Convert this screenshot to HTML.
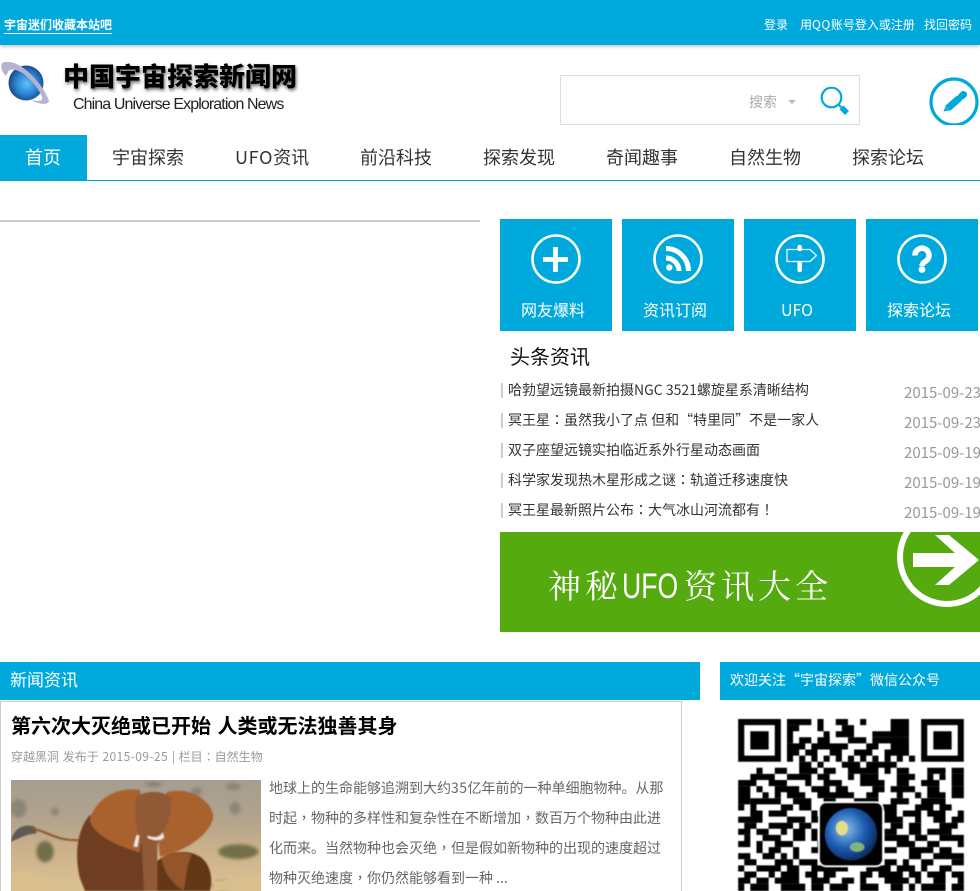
<!DOCTYPE html>
<html lang="zh-CN"><head><meta charset="utf-8"><title>中国宇宙探索新闻网</title>
<style>
*{margin:0;padding:0;box-sizing:border-box}
html,body{width:980px;height:891px;overflow:hidden;background:#fff}
body{position:relative;font-family:"WenQuanYi Zen Hei","Noto Sans CJK SC",sans-serif;color:#333}
.a{position:absolute;white-space:nowrap}
.b{background:#00a9dc}
.w{color:#fff}
.n{top:135px;height:45px;line-height:45px;font-size:18px;color:#333}
.t{top:219px;width:112px;height:112px;background:#00a9dc;color:#fff;font-size:16px;text-align:center}
.t span{position:absolute;left:-3px;right:3px;top:78px;line-height:24px}
.t svg{position:absolute;left:0;top:0}
.l{left:508px;font-size:14px;line-height:20px;color:#333}
.s{left:501px;width:2px;height:15px;background:#ccc}
.d{left:904px;font-size:15px;line-height:20px;color:#999}
.p{left:269px;font-size:14px;line-height:30px;color:#666}
i{font-style:normal;font-family:"Noto Sans CJK TC",sans-serif}
</style></head><body>
<div class="a b" style="left:0;top:0;width:980px;height:45px;box-shadow:0 1px 4px rgba(0,0,0,.3)"></div>
<div class="a w" style="left:4px;top:17px;font-size:12px;line-height:16px;font-weight:700;border-bottom:1px solid #fff">宇宙迷们收藏本站吧</div>
<div class="a w" style="left:764px;top:17px;font-size:12px;line-height:16px">登录</div>
<div class="a w" style="left:800px;top:17px;font-size:12px;line-height:16px">用<span style="letter-spacing:.5px">QQ</span>账号登入或注册</div>
<div class="a w" style="left:924px;top:17px;font-size:12px;line-height:16px">找回密码</div>

<svg class="a" style="left:0;top:55px" width="52" height="58" viewBox="0 0 52 58">
<defs><radialGradient id="pl" cx=".52" cy=".52" r=".55"><stop offset="0" stop-color="#5cc2f8"/><stop offset=".55" stop-color="#2c86d2"/><stop offset="1" stop-color="#173f7a"/></radialGradient></defs>
<circle cx="26" cy="28" r="17.500" fill="url(#pl)"/>
<path d="M2 8C8 5 18 8 26 15C36 23 46 36 49 46C48 50 40 50 31 45C37 46 43 47 42 42C38 32 30 24 24 19C15 13 9 14 8 17L6 21C2 17 0 12 2 8Z" fill="#b4b4d2"/>
</svg>
<div class="a" style="left:63px;top:59px;font-size:26px;line-height:34px;font-weight:900;color:#000;text-shadow:1px 2px 3px #666;font-family:'Noto Sans CJK SC',sans-serif">中国宇宙探索新闻网</div>
<div class="a" style="left:73px;top:95px;font-size:16px;line-height:20px;color:#222;letter-spacing:-.9px;font-family:'Liberation Sans',sans-serif">China Universe Exploration News</div>

<div class="a" style="left:560px;top:75px;width:300px;height:50px;border:1px solid #ddd"></div>
<div class="a" style="left:749px;top:93px;font-size:14px;line-height:18px;color:#aaa">搜索</div>
<svg class="a" style="left:786px;top:98px" width="12" height="8"><path d="M2 2h8l-4 4z" fill="#bbb"/></svg>
<svg class="a" style="left:818px;top:84px" width="34" height="34" viewBox="0 0 34 34"><circle cx="13.500" cy="13.500" r="9.800" fill="none" stroke="#00a9dc" stroke-width="2.200"/><path d="M20.500 20.500L24 24" stroke="#00a9dc" stroke-width="2"/><path d="M23.500 23.500L29 29" stroke="#00a9dc" stroke-width="5.500"/></svg>
<svg class="a" style="left:926px;top:74px" width="54" height="51" viewBox="0 0 54 51"><circle cx="28" cy="28" r="23" fill="none" stroke="#00a9dc" stroke-width="3.200"/><path d="M21.500 34.500L33.500 24" stroke="#00a9dc" stroke-width="7"/><path d="M35.500 22.300L37.500 20.500" stroke="#00a9dc" stroke-width="7" stroke-linecap="round"/><path d="M17.500 37.500l2-5l3.500 4z" fill="#00a9dc"/></svg>

<div class="a b" style="left:0;top:135px;width:87px;height:45px"></div>
<div class="a" style="left:0;top:180px;width:980px;height:1px;background:#00a9dc"></div>
<div class="a n" style="left:25px;color:#fff">首页</div>
<div class="a n" style="left:112px">宇宙探索</div>
<div class="a n" style="left:235px"><span style="letter-spacing:.7px">UFO</span>资讯</div>
<div class="a n" style="left:360px">前沿科技</div>
<div class="a n" style="left:483px">探索发现</div>
<div class="a n" style="left:606px">奇闻趣事</div>
<div class="a n" style="left:729px">自然生物</div>
<div class="a n" style="left:852px">探索论坛</div>

<div class="a" style="left:0;top:220px;width:480px;height:2px;background:#ccc"></div>

<div class="a t" style="left:500px"><svg width="112" height="80" fill="none" stroke="#fff"><circle cx="56" cy="40" r="23.500" stroke-width="2.600"/><path d="M55.500 28v25M43 40.500h25" stroke-width="4.800"/></svg><span>网友爆料</span></div>
<div class="a t" style="left:622px"><svg width="112" height="80" fill="none" stroke="#fff"><circle cx="56" cy="40" r="23.500" stroke-width="2.600"/><path d="M44 29.500A22.500 22.500 0 0 1 66.500 52M44 39A13 13 0 0 1 57 52" stroke-width="5"/><circle cx="47.300" cy="48.500" r="3.200" fill="#fff" stroke="none"/></svg><span>资讯订阅</span></div>
<div class="a t" style="left:744px"><svg width="112" height="80" fill="none" stroke="#fff"><circle cx="56" cy="40" r="23.500" stroke-width="2.600"/><path d="M43 30.500h23l6.500 6l-6.500 6H43z" stroke-width="1.200"/><path d="M55.700 28v2M55.700 44v7" stroke-width="4.500" stroke-linecap="round"/></svg><span>UFO</span></div>
<div class="a t" style="left:866px"><svg width="112" height="80" fill="none" stroke="#fff"><circle cx="56" cy="40" r="23.500" stroke-width="2.600"/><path d="M49 36.500a7 7 0 1 1 11 5.500q-4 2.500-4 5" stroke-width="5.500"/><circle cx="56" cy="50.500" r="3.400" fill="#fff" stroke="none"/></svg><span>探索论坛</span></div>

<div class="a" style="left:510px;top:342px;font-size:20px;line-height:28px;color:#111">头条资讯</div>
<div class="a s" style="top:383px"></div><div class="a l" style="top:380px">哈勃望远镜最新拍摄NGC 3521螺旋星系清晰结构</div><div class="a d" style="top:383px">2015-09-23</div>
<div class="a s" style="top:413px"></div><div class="a l" style="top:410px">冥王星<i lang="zh-TW">：</i>虽然我小了点 但和“特里同”不是一家人</div><div class="a d" style="top:413px">2015-09-23</div>
<div class="a s" style="top:443px"></div><div class="a l" style="top:440px">双子座望远镜实拍临近系外行星动态画面</div><div class="a d" style="top:443px">2015-09-19</div>
<div class="a s" style="top:473px"></div><div class="a l" style="top:470px">科学家发现热木星形成之谜<i lang="zh-TW">：</i>轨道迁移速度快</div><div class="a d" style="top:473px">2015-09-19</div>
<div class="a s" style="top:503px"></div><div class="a l" style="top:500px">冥王星最新照片公布<i lang="zh-TW">：</i>大气冰山河流都有<i lang="zh-TW">！</i></div><div class="a d" style="top:503px">2015-09-19</div>

<div class="a" style="left:500px;top:532px;width:480px;height:100px;background:#55aa10;overflow:hidden">
<svg class="a" style="left:0;top:0" width="480" height="100"><circle cx="447" cy="25" r="47" fill="none" stroke="#fff" stroke-width="6"/><path d="M413 21h42L435 3h14l30 25l-30 25h-14l20-18h-42z" fill="#fff"/></svg>
<div class="a" style="left:48px;top:31px;font-size:33px;line-height:44px;color:#fff;font-family:'Noto Serif CJK SC',serif;letter-spacing:4px">神秘<span style="display:inline-block;width:62px;font-family:'Liberation Sans',sans-serif;letter-spacing:0;font-size:35px;transform:scaleX(.76);transform-origin:0 50%">UFO</span>资讯大全</div>
</div>

<div class="a b" style="left:0;top:662px;width:700px;height:38px"></div>
<div class="a w" style="left:10px;top:667px;font-size:17px;line-height:24px">新闻资讯</div>
<div class="a b" style="left:720px;top:662px;width:260px;height:38px"></div>
<div class="a w" style="left:730px;top:671px;font-size:14px;line-height:18px">欢迎关注“宇宙探索”微信公众号</div>

<div class="a" style="left:0;top:701px;width:682px;height:200px;border:1px solid #ccc"></div>
<div class="a" style="left:11px;top:710px;font-size:20px;line-height:30px;font-weight:700;color:#000;word-spacing:2px">第六次大灭绝或已开始 人类或无法独善其身</div>
<div class="a" style="left:11px;top:749px;font-size:12px;line-height:16px;color:#999;word-spacing:1px">穿越黑洞 发布于 <span style="letter-spacing:.4px">2015-09-25</span> | 栏目<i lang="zh-TW">：</i>自然生物</div>

<svg class="a" style="left:11px;top:780px" width="250" height="111" viewBox="33 375 750 333">
<defs><linearGradient id="bg" x1="0" y1="0" x2="0" y2="1"><stop offset="0" stop-color="#a59d90"/><stop offset=".38" stop-color="#b3a48d"/><stop offset=".6" stop-color="#c9b08a"/><stop offset="1" stop-color="#dcc292"/></linearGradient><filter id="bl"><feGaussianBlur stdDeviation="5"/></filter><filter id="b2"><feGaussianBlur stdDeviation="2"/></filter></defs>
<rect x="33" y="375" width="750" height="333" fill="url(#bg)"/>
<g filter="url(#bl)"><g fill="#6c6b5e" opacity=".5"><ellipse cx="55" cy="460" rx="24" ry="28"/><ellipse cx="165" cy="470" rx="12" ry="12"/><ellipse cx="705" cy="460" rx="16" ry="18"/><ellipse cx="700" cy="395" rx="22" ry="10"/><ellipse cx="590" cy="410" rx="16" ry="12"/><ellipse cx="460" cy="388" rx="24" ry="8"/></g>
<g fill="#72704a"><ellipse cx="135" cy="590" rx="26" ry="32"/><ellipse cx="715" cy="590" rx="60" ry="22"/><ellipse cx="670" cy="692" rx="30" ry="14"/></g></g>
<g filter="url(#b2)">
<path d="M33 560C40 520 70 505 105 515L110 535C80 535 60 550 33 560Z" fill="#5c5a52"/>
<path d="M95 521C135 525 170 560 235 555" fill="none" stroke="#8d4f28" stroke-width="6"/>
<path d="M270 480C232 520 222 600 240 670L255 708H470V590Z" fill="#6e3d20"/>
<path d="M470 708V620C500 590 560 580 600 605C630 625 640 670 630 708Z" fill="#643719"/>
<path d="M485 610C520 590 555 590 575 600C555 640 560 680 550 705C520 690 490 650 485 610Z" fill="#94552b"/>
<path d="M420 405C350 395 290 430 270 490C268 530 340 570 418 592C430 520 430 470 420 405Z" fill="#a9622f"/>
<path d="M500 412C550 395 625 420 640 480C640 530 560 590 480 605C470 540 480 470 500 412Z" fill="#a9622f"/>
<path d="M410 425C440 405 490 405 515 430C515 490 490 530 472 570V708H432L425 570C410 530 400 480 410 425Z" fill="#8f5a36"/>
<path d="M410 540L418 542L412 576L401 574Z" fill="#f3eadb"/><path d="M443 542C460 550 480 548 488 532L492 548C480 560 455 556 443 548Z" fill="#f3eadb"/>
<path d="M33 708V660C60 640 120 650 170 680L240 690V708ZM640 708V680L783 660V708Z" fill="#d8bf8d"/>
</g>
</svg>

<div class="a p" style="top:773px">地球上的生命能够追溯到大约<span style="letter-spacing:.5px">35</span>亿年前的一种单细胞物种。从那</div>
<div class="a p" style="top:803px">时起<i lang="zh-TW">，</i>物种的多样性和复杂性在不断增加<i lang="zh-TW">，</i>数百万个物种由此进</div>
<div class="a p" style="top:833px">化而来。当然物种也会灭绝<i lang="zh-TW">，</i>但是假如新物种的出现的速度超过</div>
<div class="a p" style="top:863px">物种灭绝速度<i lang="zh-TW">，</i>你仍然能够看到一种 ...</div>

<svg class="a" style="left:738px;top:719px;filter:blur(.4px)" width="226" height="172" viewBox="0 0 37 28.200">
<path fill="#000" d="M0 0h7v7H0zM1 1v5h5V1zM2 2h3v3H2zM30 0h7v7h-7zM31 1v5h5V1zM32 2h3v3h-3z" fill-rule="evenodd"/>
<g fill="#000">
<path d="M8 0h4v1H8zM13 0h1v2h-1zM16 0h2v1h-2zM20 0h1v1h-1zM25 0h3v3h-3z"/>
<path d="M8 1h2v1H8zM17 1h2v2h-2zM8 2h1v2H8zM14 2h1v2h-1zM16 2h2v1h-2zM22 2h5v1h-5z"/>
<path d="M10 3h2v1h-2zM13 3h2v1h-2zM18 3h3v1h-3zM22 3h6v1h-6zM8 4h3v1H8zM12 4h6v1h-6zM21 4h2v1h-2zM25 4h3v2h-3z"/>
<path d="M8 5h2v1H8zM11 5h2v1h-2zM15 5h2v1h-2zM19 5h3v1h-3zM24 5h4v1h-4zM8 6h1v1H8zM10 6h1v1h-1zM12 6h1v1h-1zM14 6h1v1h-1zM16 6h1v1h-1zM18 6h1v1h-1zM20 6h1v1h-1zM22 6h1v1h-1zM24 6h1v1h-1zM26 6h1v1h-1zM28 6h1v1h-1z"/>
<path d="M10 7h2v1h-2zM13 7h1v1h-1zM17 7h3v1h-3zM21 7h5v1h-5zM3 8h1v1H3zM6 8h2v1H6zM10 8h3v1h-3zM14 8h2v1h-2zM18 8h5v1h-5zM24 8h1v1h-1zM26 8h2v1h-2zM31 8h3v1h-3zM35 8h2v1h-2z"/>
<path d="M2 9h4v1H2zM8 9h4v1H8zM13 9h2v1h-2zM18 9h1v1h-1zM20 9h3v1h-3zM26 9h3v1h-3zM31 9h1v1h-1zM33 9h1v1h-1zM35 9h2v1h-2zM0 10h3v1H0zM5 10h3v1H5zM11 10h1v1h-1zM14 10h3v1h-3zM20 10h4v1h-4zM26 10h2v1h-2zM30 10h3v1h-3zM35 10h2v1h-2z"/>
<path d="M0 11h2v3H0zM3 11h1v1H3zM6 11h4v1H6zM12 11h3v1h-3zM16 11h2v1h-2zM22 11h2v1h-2zM25 11h4v1h-4zM31 11h2v1h-2zM35 11h2v2h-2zM4 12h1v1H4zM6 12h1v1H6zM8 12h3v1H8zM13 12h6v1h-6zM21 12h2v1h-2zM26 12h1v1h-1zM29 12h1v1h-1zM31 12h3v1h-3z"/>
<path d="M2 13h5v1H2zM9 13h3v1H9zM14 13h2v1h-2zM19 13h4v1h-4zM25 13h3v1h-3zM30 13h4v1h-4zM0 14h1v1H0zM2 14h1v1H2zM7 14h2v1H7zM10 14h2v1h-2zM23 14h3v1h-3zM29 14h3v1h-3zM33 14h2v1h-2z"/>
<path d="M2 15h2v1H2zM5 15h3v1H5zM12 15h1v1h-1zM24 15h2v1h-2zM27 15h3v1h-3zM31 15h3v1h-3zM36 15h1v1h-1zM0 16h4v1H0zM8 16h3v1H8zM12 16h2v1h-2zM24 16h3v1h-3zM29 16h1v1h-1zM32 16h2v1h-2zM35 16h2v1h-2z"/>
<path d="M1 17h2v1H1zM5 17h4v1H5zM10 17h2v1h-2zM25 17h2v1h-2zM28 17h2v2h-2zM33 17h3v1h-3zM0 18h2v1H0zM3 18h2v1H3zM7 18h1v1H7zM9 18h2v2H9zM12 18h1v2h-1zM24 18h2v1h-2zM31 18h4v1h-4z"/>
<path d="M1 19h1v2H1zM4 19h3v1H4zM24 19h4v1h-4zM29 19h2v1h-2zM33 19h4v1h-4zM0 20h1v1H0zM3 20h1v2H3zM6 20h3v1H6zM13 20h1v1h-1zM26 20h3v1h-3zM31 20h2v1h-2zM36 20h1v1h-1z"/>
<path d="M5 21h2v1H5zM9 21h1v2H9zM12 21h2v1h-2zM24 21h2v1h-2zM28 21h4v1h-4zM33 21h2v1h-2zM0 22h2v1H0zM4 22h2v1H4zM7 22h1v1H7zM28 22h2v1h-2zM32 22h5v1h-5z"/>
<path d="M1 23h2v1H1zM6 23h3v1H6zM10 23h3v1h-3zM14 23h1v1h-1zM24 23h2v1h-2zM27 23h1v1h-1zM30 23h2v1h-2zM35 23h2v1h-2zM0 24h1v1H0zM3 24h4v1H3zM8 24h2v1H8zM12 24h6v1h-6zM21 24h4v1h-4zM26 24h3v1h-3zM30 24h1v1h-1zM33 24h2v1h-2z"/>
<path d="M1 25h2v1H1zM5 25h1v1H5zM7 25h3v1H7zM11 25h2v1h-2zM14 25h2v1h-2zM20 25h2v1h-2zM23 25h4v1h-4zM28 25h2v1h-2zM31 25h3v1h-3zM35 25h2v1h-2zM0 26h2v1H0zM3 26h2v1H3zM6 26h4v1H6zM12 26h3v1h-3zM17 26h2v1h-2zM20 26h1v1h-1zM24 26h4v1h-4zM29 26h1v1h-1zM32 26h2v1h-2zM36 26h1v1h-1z"/>
<path d="M0 27h1v2H0zM2 27h3v2H2zM7 27h4v2H7zM12 27h2v2h-2zM15 27h3v2h-3zM20 27h3v2h-3zM25 27h2v2h-2zM28 27h1v2h-1zM30 27h4v2h-4zM35 27h2v2h-2z"/>
</g>
<rect x="13.100" y="13.500" width="10.800" height="10.800" rx="1.300" fill="#fff"/>
<rect x="13.400" y="13.800" width="10.200" height="10.200" rx="1" fill="#000"/>
<defs><radialGradient id="ea" cx=".4" cy=".4" r=".65"><stop offset="0" stop-color="#8ec0e8"/><stop offset=".55" stop-color="#1d5fb5"/><stop offset="1" stop-color="#0a2556"/></radialGradient></defs>
<circle cx="18.500" cy="18.900" r="4.300" fill="url(#ea)"/>
<ellipse cx="17" cy="17.900" rx="1" ry="1.200" fill="#e4dd8a"/><ellipse cx="19.500" cy="21" rx="1.200" ry=".8" fill="#7fb57c"/>
</svg>
</body></html>
